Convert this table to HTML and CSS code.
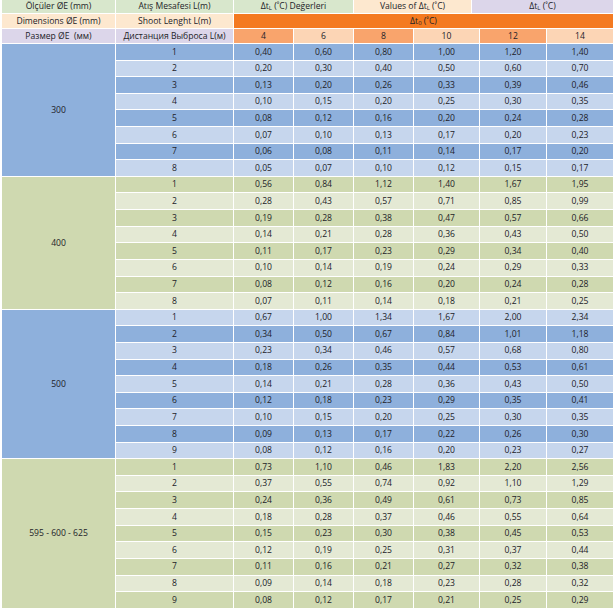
FILE: index.html
```html
<!DOCTYPE html>
<html lang="tr">
<head>
<meta charset="utf-8">
<title>Δt Değerleri</title>
<link rel="stylesheet" href="styles.css">
</head>
<body>
<div class="sheet">
  <div class="c hg">Ölçüler ØE (mm)</div>
  <div class="c hg">Atış Mesafesi L(m)</div>
  <div class="split">
    <div class="c hg s1"><span>Δt<sub>L</sub> (˚C) Değerleri</span></div>
    <div class="c hp s2"><span>Values of Δt<sub>L</sub> (˚C)</span></div>
    <div class="c hl s3"><span>Δt<sub>L</sub> (˚C)</span></div>
  </div>

  <div class="c hp">Dimensions ØE (mm)</div>
  <div class="c hp">Shoot Lenght L(m)</div>
  <div class="c ho wide"><span>Δt<sub>0</sub> (˚C)</span></div>

  <div class="c hl">Размер ØE &nbsp;(мм)</div>
  <div class="c hl">Дистанция Выброса L(м)</div>
  <div class="c hs">4</div>
  <div class="c hq">6</div>
  <div class="c hs">8</div>
  <div class="c hq">10</div>
  <div class="c hs">12</div>
  <div class="c hq">14</div>

  <!-- 300 -->
  <div class="c sec b span8">300</div>
  <div class="c bd">1</div><div class="c bd">0,40</div><div class="c bd">0,60</div><div class="c bd">0,80</div><div class="c bd">1,00</div><div class="c bd">1,20</div><div class="c bd">1,40</div>
  <div class="c bl">2</div><div class="c bl">0,20</div><div class="c bl">0,30</div><div class="c bl">0,40</div><div class="c bl">0,50</div><div class="c bl">0,60</div><div class="c bl">0,70</div>
  <div class="c bd">3</div><div class="c bd">0,13</div><div class="c bd">0,20</div><div class="c bd">0,26</div><div class="c bd">0,33</div><div class="c bd">0,39</div><div class="c bd">0,46</div>
  <div class="c bl">4</div><div class="c bl">0,10</div><div class="c bl">0,15</div><div class="c bl">0,20</div><div class="c bl">0,25</div><div class="c bl">0,30</div><div class="c bl">0,35</div>
  <div class="c bd">5</div><div class="c bd">0,08</div><div class="c bd">0,12</div><div class="c bd">0,16</div><div class="c bd">0,20</div><div class="c bd">0,24</div><div class="c bd">0,28</div>
  <div class="c bl">6</div><div class="c bl">0,07</div><div class="c bl">0,10</div><div class="c bl">0,13</div><div class="c bl">0,17</div><div class="c bl">0,20</div><div class="c bl">0,23</div>
  <div class="c bd">7</div><div class="c bd">0,06</div><div class="c bd">0,08</div><div class="c bd">0,11</div><div class="c bd">0,14</div><div class="c bd">0,17</div><div class="c bd">0,20</div>
  <div class="c bl">8</div><div class="c bl">0,05</div><div class="c bl">0,07</div><div class="c bl">0,10</div><div class="c bl">0,12</div><div class="c bl">0,15</div><div class="c bl">0,17</div>

  <!-- 400 -->
  <div class="c sec g span8">400</div>
  <div class="c gd">1</div><div class="c gd">0,56</div><div class="c gd">0,84</div><div class="c gd">1,12</div><div class="c gd">1,40</div><div class="c gd">1,67</div><div class="c gd">1,95</div>
  <div class="c gl">2</div><div class="c gl">0,28</div><div class="c gl">0,43</div><div class="c gl">0,57</div><div class="c gl">0,71</div><div class="c gl">0,85</div><div class="c gl">0,99</div>
  <div class="c gd">3</div><div class="c gd">0,19</div><div class="c gd">0,28</div><div class="c gd">0,38</div><div class="c gd">0,47</div><div class="c gd">0,57</div><div class="c gd">0,66</div>
  <div class="c gl">4</div><div class="c gl">0,14</div><div class="c gl">0,21</div><div class="c gl">0,28</div><div class="c gl">0,36</div><div class="c gl">0,43</div><div class="c gl">0,50</div>
  <div class="c gd">5</div><div class="c gd">0,11</div><div class="c gd">0,17</div><div class="c gd">0,23</div><div class="c gd">0,29</div><div class="c gd">0,34</div><div class="c gd">0,40</div>
  <div class="c gl">6</div><div class="c gl">0,10</div><div class="c gl">0,14</div><div class="c gl">0,19</div><div class="c gl">0,24</div><div class="c gl">0,29</div><div class="c gl">0,33</div>
  <div class="c gd">7</div><div class="c gd">0,08</div><div class="c gd">0,12</div><div class="c gd">0,16</div><div class="c gd">0,20</div><div class="c gd">0,24</div><div class="c gd">0,28</div>
  <div class="c gl">8</div><div class="c gl">0,07</div><div class="c gl">0,11</div><div class="c gl">0,14</div><div class="c gl">0,18</div><div class="c gl">0,21</div><div class="c gl">0,25</div>

  <!-- 500 -->
  <div class="c sec b span9">500</div>
  <div class="c bl">1</div><div class="c bl">0,67</div><div class="c bl">1,00</div><div class="c bl">1,34</div><div class="c bl">1,67</div><div class="c bl">2,00</div><div class="c bl">2,34</div>
  <div class="c bd">2</div><div class="c bd">0,34</div><div class="c bd">0,50</div><div class="c bd">0,67</div><div class="c bd">0,84</div><div class="c bd">1,01</div><div class="c bd">1,18</div>
  <div class="c bl">3</div><div class="c bl">0,23</div><div class="c bl">0,34</div><div class="c bl">0,46</div><div class="c bl">0,57</div><div class="c bl">0,68</div><div class="c bl">0,80</div>
  <div class="c bd">4</div><div class="c bd">0,18</div><div class="c bd">0,26</div><div class="c bd">0,35</div><div class="c bd">0,44</div><div class="c bd">0,53</div><div class="c bd">0,61</div>
  <div class="c bl">5</div><div class="c bl">0,14</div><div class="c bl">0,21</div><div class="c bl">0,28</div><div class="c bl">0,36</div><div class="c bl">0,43</div><div class="c bl">0,50</div>
  <div class="c bd">6</div><div class="c bd">0,12</div><div class="c bd">0,18</div><div class="c bd">0,23</div><div class="c bd">0,29</div><div class="c bd">0,35</div><div class="c bd">0,41</div>
  <div class="c bl">7</div><div class="c bl">0,10</div><div class="c bl">0,15</div><div class="c bl">0,20</div><div class="c bl">0,25</div><div class="c bl">0,30</div><div class="c bl">0,35</div>
  <div class="c bd">8</div><div class="c bd">0,09</div><div class="c bd">0,13</div><div class="c bd">0,17</div><div class="c bd">0,22</div><div class="c bd">0,26</div><div class="c bd">0,30</div>
  <div class="c bl">9</div><div class="c bl">0,08</div><div class="c bl">0,12</div><div class="c bl">0,16</div><div class="c bl">0,20</div><div class="c bl">0,23</div><div class="c bl">0,27</div>

  <!-- 595 - 600 - 625 -->
  <div class="c sec g span9">595 - 600 - 625</div>
  <div class="c gd">1</div><div class="c gd">0,73</div><div class="c gd">1,10</div><div class="c gd">0,46</div><div class="c gd">1,83</div><div class="c gd">2,20</div><div class="c gd">2,56</div>
  <div class="c gl">2</div><div class="c gl">0,37</div><div class="c gl">0,55</div><div class="c gl">0,74</div><div class="c gl">0,92</div><div class="c gl">1,10</div><div class="c gl">1,29</div>
  <div class="c gd">3</div><div class="c gd">0,24</div><div class="c gd">0,36</div><div class="c gd">0,49</div><div class="c gd">0,61</div><div class="c gd">0,73</div><div class="c gd">0,85</div>
  <div class="c gl">4</div><div class="c gl">0,18</div><div class="c gl">0,28</div><div class="c gl">0,37</div><div class="c gl">0,46</div><div class="c gl">0,55</div><div class="c gl">0,64</div>
  <div class="c gd">5</div><div class="c gd">0,15</div><div class="c gd">0,23</div><div class="c gd">0,30</div><div class="c gd">0,38</div><div class="c gd">0,45</div><div class="c gd">0,53</div>
  <div class="c gl">6</div><div class="c gl">0,12</div><div class="c gl">0,19</div><div class="c gl">0,25</div><div class="c gl">0,31</div><div class="c gl">0,37</div><div class="c gl">0,44</div>
  <div class="c gd">7</div><div class="c gd">0,11</div><div class="c gd">0,16</div><div class="c gd">0,21</div><div class="c gd">0,27</div><div class="c gd">0,32</div><div class="c gd">0,38</div>
  <div class="c gl">8</div><div class="c gl">0,09</div><div class="c gl">0,14</div><div class="c gl">0,18</div><div class="c gl">0,23</div><div class="c gl">0,28</div><div class="c gl">0,32</div>
  <div class="c gd">9</div><div class="c gd">0,08</div><div class="c gd">0,12</div><div class="c gd">0,17</div><div class="c gd">0,21</div><div class="c gd">0,25</div><div class="c gd">0,29</div>
</div>
</body>
</html>
```
FILE: styles.css
```css
html, body {
  margin: 0;
  padding: 0;
  background: #ffffff;
}

body {
  padding-left: 2px;
  font-family: "Open Sans", "DejaVu Sans", sans-serif;
  font-size: 8.6px;
  color: #222228;
}

.sheet {
  display: grid;
  grid-template-columns: 113px 117px 59px 59px 59px 65px 66px 66px;
  grid-template-rows: 13px 14px 14px repeat(34, 15.62px);
  gap: 1px;
  width: 611px;
}

.c {
  display: flex;
  align-items: center;
  justify-content: center;
  white-space: nowrap;
  line-height: 1;
}

.c sub {
  font-size: 6px;
  vertical-align: -1px;
  line-height: 0;
}

.split {
  grid-column: 3 / -1;
  display: flex;
  gap: 1px;
}
.s1 { width: 119px; flex: none; }
.s2 { width: 117px; flex: none; }
.s3 { flex: 1; }

.wide { grid-column: 3 / -1; }

.hg { background: #d8e7cc; }
.hp { background: #fde8cf; }
.hl { background: #dcd6ea; }
.ho { background: #f47a21; }
.hs { background: #f9a46c; }
.hq { background: #fcd5b5; }

.span8 { grid-row: span 8; }
.span9 { grid-row: span 9; }

.sec.b { background: #8eb0dc; }
.sec.g { background: #cfd9b0; }

.bd { background: #8eb0dc; }
.bl { background: #c6d6ed; }
.gd { background: #cfd9b0; }
.gl { background: #e4e9d4; }
```
